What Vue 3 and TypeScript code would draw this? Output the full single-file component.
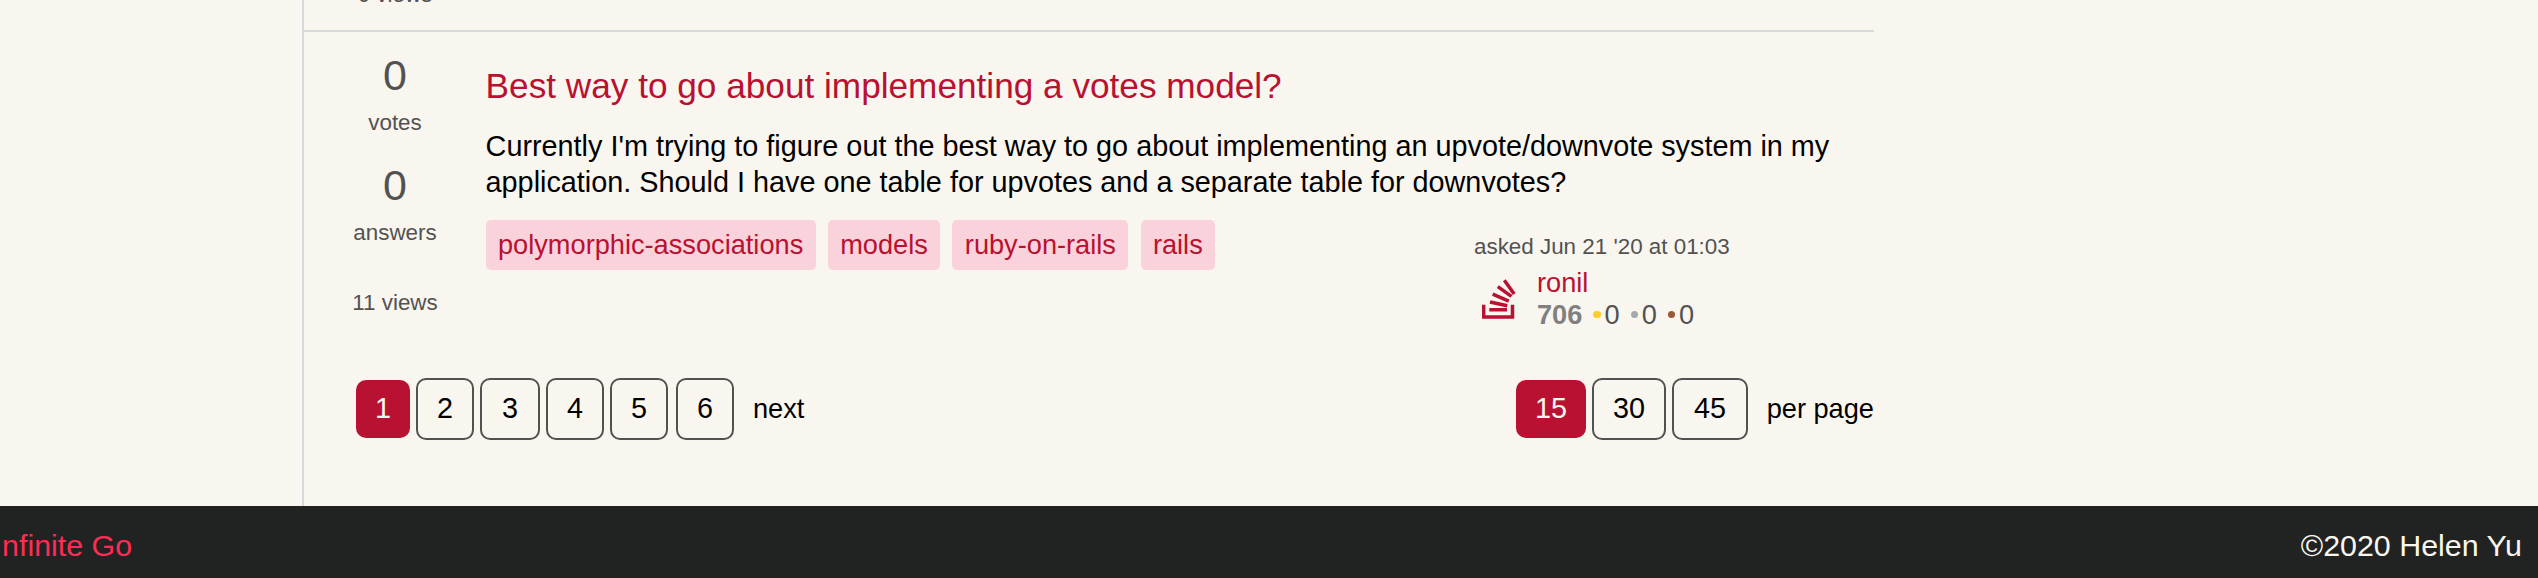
<script setup lang="ts">
interface PageItem {
  label: string
  active?: boolean
  fit?: string
}

const pages: PageItem[] = [
  { label: '1', active: true },
  { label: '2' },
  { label: '3', fit: 'wide' },
  { label: '4' },
  { label: '5' },
  { label: '6', fit: 'spaced' },
]
const sizes: PageItem[] = [
  { label: '15', active: true },
  { label: '30' },
  { label: '45', fit: 'wide' },
]
const tags: string[] = ['polymorphic-associations', 'models', 'ruby-on-rails', 'rails']
const badges: string[] = ['gold', 'silver', 'bronze']
</script>

<template>
  <div class="page">
    <main class="content">
      <section class="previous">
        <div class="views">0 views</div>
      </section>
      <article class="question">
        <div class="stats">
          <div class="count">0</div>
          <div class="label">votes</div>
          <div class="count">0</div>
          <div class="label">answers</div>
          <div class="views">11 views</div>
        </div>
        <div class="summary">
          <h3 class="title">Best way to go about implementing a votes model?</h3>
          <p class="excerpt">
            Currently I'm trying to figure out the best way to go about implementing an upvote/downvote system in my
            application. Should I have one table for upvotes and a separate table for downvotes?
          </p>
          <div class="meta">
            <div class="tags">
              <span v-for="tag in tags" :key="tag" class="tag">{{ tag }}</span>
            </div>
            <div class="author">
              <div class="asked">asked Jun 21 '20 at 01:03</div>
              <div class="user">
                <svg class="avatar" viewBox="0 0 34 42" width="34" height="42">
                  <path d="M1.7 26.7V39.1H30.5V26.7" />
                  <path d="M7.3 31.8H25M8 24L25.3 27.7M10.7 16.1L26.8 23.1M15.8 8.6L29.4 18.4M22.3 2.2L32.2 16" />
                </svg>
                <div>
                  <div class="name">ronil</div>
                  <div class="reputation">
                    <b>706</b>
                    <span v-for="badge in badges" :key="badge" class="badge" :class="badge">0</span>
                  </div>
                </div>
              </div>
            </div>
          </div>
        </div>
      </article>
      <nav class="pagination">
        <div class="group">
          <span v-for="p in pages" :key="p.label" class="button" :class="[p.fit, { active: p.active }]">{{ p.label }}</span>
          <span class="next">next</span>
        </div>
        <div class="group large">
          <span v-for="s in sizes" :key="s.label" class="button" :class="[s.fit, { active: s.active }]">{{ s.label }}</span>
          <span class="next">per page</span>
        </div>
      </nav>
    </main>
    <footer class="footer">
      <span class="brand">Infinite Go</span>
      <span>©2020 Helen Yu</span>
    </footer>
  </div>
</template>

<style>
body {
  margin: 0;
  overflow: hidden;
  background: #f9f6ef;
}
</style>

<style scoped>
.page {
  height: 578px;
  overflow: hidden;
  background: #f9f6ef;
  font-family: 'Liberation Sans', Arial, sans-serif;
  color: #000;
  display: flex;
  flex-direction: column;
}
.content {
  box-sizing: border-box;
  width: 1572px;
  height: 506px;
  margin-left: 302px;
  border-left: 2px solid #d8d9da;
}
.previous {
  display: flex;
  flex-direction: column;
  justify-content: flex-end;
  height: 32px;
  box-sizing: border-box;
  padding: 0 0 22px 24px;
  border-bottom: 2px solid #d8d9da;
}
.question {
  display: flex;
  height: 312px;
}
.stats {
  width: 134px;
  margin-left: 24px;
  padding-top: 19px;
  text-align: center;
  color: #525252;
}
.count {
  font-size: 43px;
  line-height: 48px;
}
.label {
  font-size: 22.4px;
  line-height: 27px;
  margin: 10px 0 25px;
}
.views {
  color: #525252;
  text-align: center;
  font-size: 22.4px;
  line-height: 27px;
  margin-top: 43px;
}
.previous .views {
  width: 134px;
  margin: 0;
}
.summary {
  flex: 1;
  padding: 33px 0 0 23.6px;
}
.title {
  margin: 0;
  font-size: 35.2px;
  line-height: 41px;
  font-weight: 400;
  color: #b81131;
}
.excerpt {
  margin: 22px 0 0;
  width: 1370px;
  font-size: 28.8px;
  line-height: 36px;
}
.meta {
  display: flex;
  justify-content: space-between;
  margin-top: 20px;
}
.tags {
  display: flex;
  gap: 12.2px;
  align-items: flex-start;
}
.tag {
  padding: 0 12.4px;
  height: 50px;
  line-height: 49px;
  border-radius: 5px;
  font-size: 27.2px;
  background: #fad2db;
  color: #b81131;
}
.author {
  width: 400px;
  padding-top: 13px;
}
.asked {
  font-size: 22.4px;
  line-height: 27px;
  color: #525252;
}
.user {
  display: flex;
  margin-top: 7px;
}
.avatar {
  margin: 11px 21px 0 8px;
  fill: none;
  stroke: #b81131;
  stroke-width: 3.5;
}
.name {
  font-size: 27.2px;
  line-height: 31px;
  color: #b81131;
}
.reputation {
  display: flex;
  align-items: center;
  font-size: 27.2px;
  line-height: 33px;
  color: #525252;
}
.reputation b {
  color: #808080;
  margin-right: 11px;
}
.badge {
  display: flex;
  align-items: center;
  width: 37.3px;
}
.badge::before {
  content: '';
  width: 7.5px;
  height: 7.5px;
  margin: 0 3.5px 0 0;
  border-radius: 50%;
}
.gold::before {
  background: #ffcc2e;
}
.silver::before {
  background: #a7a8aa;
}
.bronze::before {
  background: #99593a;
}
.pagination {
  display: flex;
  justify-content: space-between;
  padding: 34px 0 0 52px;
}
.group {
  display: flex;
  align-items: center;
  gap: 6px;
}
.button {
  box-sizing: border-box;
  width: 58px;
  height: 62px;
  line-height: 56px;
  border: 2px solid #525252;
  border-radius: 10px;
  text-align: center;
  font-size: 28.8px;
}
.wide {
  width: 60px;
}
.spaced {
  margin-left: 2px;
}
.large .button {
  width: 74px;
}
.large .wide {
  width: 76px;
}
.button.active {
  width: 54px;
  height: 58px;
  border: 0;
  background: #b81131;
  color: #f9f6ef;
}
.large .button.active {
  width: 70px;
}
.next {
  margin-left: 13px;
  padding-bottom: 1px;
  font-size: 27.2px;
}
.large .next {
  margin-left: 12.6px;
}
.footer {
  display: flex;
  justify-content: space-between;
  height: 72px;
  padding: 0 16px 0 0;
  font-size: 30.4px;
  line-height: 78px;
  background: #212322;
  color: #f9f6ef;
}
.brand {
  margin-left: -6.4px;
  color: #ff2c55;
}
</style>
